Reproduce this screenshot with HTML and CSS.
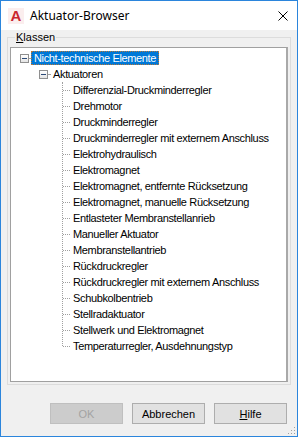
FILE: index.html
```html
<!DOCTYPE html>
<html lang="de">
<head>
    <meta charset="UTF-8">
    <title>Aktuator-Browser</title>
    <link rel="stylesheet" href="styles.css">
</head>
<body>
<div class="window">
    <div class="titlebar">
        <span class="app-icon">A</span>
        <span class="title">Aktuator-Browser</span>
        <svg class="close" width="10" height="10" viewBox="0 0 10 10">
            <path d="M0.5 0.5 L9.5 9.5 M9.5 0.5 L0.5 9.5" stroke="#000" stroke-width="1"/>
        </svg>
    </div>

    <div class="content">
        <div class="group">
            <span class="group-label"><u>K</u>lassen</span>
            <div class="tree">
                <div class="row root">
                    <span class="toggle"></span><span class="dash"></span>
                    <span class="label selected">Nicht-technische Elemente</span>
                </div>
                <div class="row level1">
                    <span class="toggle"></span><span class="dash"></span>
                    <span class="label">Aktuatoren</span>
                </div>
                <ul class="leaves">
                    <li><span class="label">Differenzial-Druckminderregler</span></li>
                    <li><span class="label">Drehmotor</span></li>
                    <li><span class="label">Druckminderregler</span></li>
                    <li><span class="label">Druckminderregler mit externem Anschluss</span></li>
                    <li><span class="label">Elektrohydraulisch</span></li>
                    <li><span class="label">Elektromagnet</span></li>
                    <li><span class="label">Elektromagnet, entfernte Rücksetzung</span></li>
                    <li><span class="label">Elektromagnet, manuelle Rücksetzung</span></li>
                    <li><span class="label">Entlasteter Membranstellanrieb</span></li>
                    <li><span class="label">Manueller Aktuator</span></li>
                    <li><span class="label">Membranstellantrieb</span></li>
                    <li><span class="label">Rückdruckregler</span></li>
                    <li><span class="label">Rückdruckregler mit externem Anschluss</span></li>
                    <li><span class="label">Schubkolbentrieb</span></li>
                    <li><span class="label">Stellradaktuator</span></li>
                    <li><span class="label">Stellwerk und Elektromagnet</span></li>
                    <li><span class="label">Temperaturregler, Ausdehnungstyp</span></li>
                </ul>
            </div>
        </div>

        <div class="buttons">
            <button disabled>OK</button>
            <button>Abbrechen</button>
            <button><u>H</u>ilfe</button>
        </div>
    </div>

    <svg class="grip" width="10" height="10" viewBox="0 0 10 10">
        <rect x="8" y="2" width="1" height="1" fill="#a0a0a0"/>
        <rect x="8" y="5" width="1" height="1" fill="#a0a0a0"/>
        <rect x="5" y="5" width="1" height="1" fill="#a0a0a0"/>
        <rect x="8" y="8" width="1" height="1" fill="#a0a0a0"/>
        <rect x="5" y="8" width="1" height="1" fill="#a0a0a0"/>
        <rect x="2" y="8" width="1" height="1" fill="#a0a0a0"/>
    </svg>
</div>
</body>
</html>
```

FILE: styles.css
```css
body {
    margin: 0;
    font-family: "Liberation Sans", Arial, sans-serif;
    font-size: 11px;
    color: #000;
}
.window {
    position: relative;
    box-sizing: border-box;
    width: 298px;
    height: 437px;
    border: 1px solid #2b85dc;
    background: #f0f0f0;
    display: flex;
    flex-direction: column;
}
.titlebar {
    height: 29px;
    flex: none;
    background: #fff;
    display: flex;
    align-items: center;
    padding-left: 7px;
}
.app-icon {
    width: 16px;
    height: 16px;
    background: #fbeeee;
    color: #c9262f;
    font-weight: bold;
    font-size: 15px;
    line-height: 16px;
    text-align: center;
}
.title {
    margin-left: 6px;
    font-family: "Noto Sans", "Liberation Sans", sans-serif;
    font-size: 12px;
}
.close {
    margin-left: auto;
    margin-right: 9px;
}
.content {
    flex: 1;
    display: flex;
    flex-direction: column;
    padding: 7px 6px 0 6px;
}
.group {
    position: relative;
    height: 348px;
    box-sizing: border-box;
    border: 1px solid #dcdcdc;
    padding: 9px 2px 2px 2px;
    display: flex;
    flex-direction: column;
}
.group-label {
    position: absolute;
    top: -7px;
    left: 7px;
    padding: 0 1px;
    background: #f0f0f0;
    line-height: 13px;
}
.tree {
    flex: 1;
    box-sizing: border-box;
    background: #fff;
    border: 1px solid #a0a0a0;
    border-right: 2px solid #a9a9a9;
    padding-top: 2px;
    letter-spacing: -0.35px;
}
.row {
    height: 16px;
    display: flex;
    align-items: center;
}
.root {
    padding-left: 9px;
}
.level1 {
    padding-left: 28px;
}
.toggle {
    box-sizing: border-box;
    width: 9px;
    height: 9px;
    border: 1px solid #8f8f8f;
    background: linear-gradient(#ffffff, #e4e4e4);
    display: flex;
    align-items: center;
    justify-content: center;
}
.toggle::before {
    content: "";
    width: 5px;
    height: 1px;
    background: #2c4a78;
}
.dash {
    width: 2px;
    border-top: 1px dotted #a0a0a0;
}
.label {
    height: 14px;
    box-sizing: border-box;
    line-height: 12px;
    padding: 0 2px;
    border: 1px solid transparent;
    white-space: nowrap;
}
.selected {
    background: #0078d7;
    color: #fff;
    border: 1px dotted #b8783a;
}
.leaves {
    list-style: none;
    margin: 0 0 0 51px;
    padding: 0;
    border-left: 1px dotted #a0a0a0;
    display: flex;
    flex-direction: column;
}
.leaves li {
    height: 16px;
    display: flex;
    align-items: center;
}
.leaves li::before {
    content: "";
    width: 7px;
    border-top: 1px dotted #a0a0a0;
}
.leaves li:last-child {
    margin-bottom: -8px;
}
.buttons {
    display: flex;
    justify-content: flex-end;
    gap: 9px;
    margin-top: 18px;
    padding-right: 4px;
}
button {
    width: 73px;
    height: 21px;
    padding: 0;
    font-family: "Liberation Sans", Arial, sans-serif;
    font-size: 11px;
    color: #000;
    background: #e1e1e1;
    border: 1px solid #adadad;
}
button:disabled {
    background: #cccccc;
    border-color: #bfbfbf;
    color: #a3a3a3;
}
.grip {
    position: absolute;
    right: 1px;
    bottom: 1px;
}
```
